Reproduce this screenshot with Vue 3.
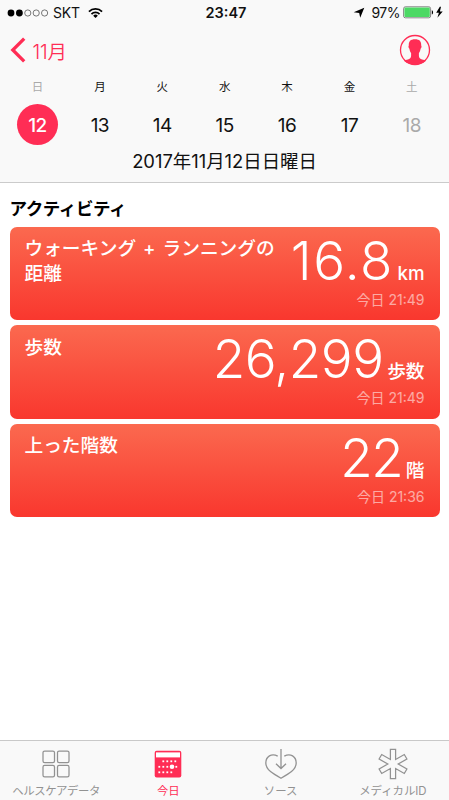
<script setup>
const days = [
  { name: '日', date: 12, weekend: true, selected: true },
  { name: '月', date: 13 },
  { name: '火', date: 14 },
  { name: '水', date: 15 },
  { name: '木', date: 16 },
  { name: '金', date: 17 },
  { name: '土', date: 18, weekend: true, future: true },
]
const cards = [
  { kind: 'distance', lines: ['ウォーキング + ランニングの', '距離'], value: '16.8', unit: 'km', time: '今日 21:49' },
  { kind: 'steps', lines: ['歩数'], value: '26,299', unit: '歩数', time: '今日 21:49' },
  { kind: 'floors', lines: ['上った階数'], value: '22', unit: '階', time: '今日 21:36' },
]
const dots = [
  [9, 10], [13, 10], [17, 10], [21, 10],
  [5, 15.5], [9, 15.5], [13, 15.5], [22, 15.5],
  [5, 21], [9, 21], [13, 21], [17, 21],
]
</script>

<template>
  <div class="screen">
    <header class="header">
      <div class="status">
        <div class="carrier">
          <svg class="signal" width="42" height="8" viewBox="0 0 42 8">
            <circle cx="4" cy="4" r="3.4" fill="#000" />
            <circle cx="12.4" cy="4" r="3.4" fill="#000" />
            <g fill="none" stroke="#555" stroke-width=".8">
              <circle cx="20.8" cy="4" r="3.1" />
              <circle cx="29.2" cy="4" r="3.1" />
              <circle cx="37.6" cy="4" r="3.1" />
            </g>
          </svg>
          <span class="network">SKT</span>
          <svg width="15" height="12" viewBox="0 0 16 12">
            <g fill="none" stroke="#000" stroke-width="1.9">
              <path d="M1 4.5a10 10 0 0 1 14 0" />
              <path d="M3.7 7.1a6.2 6.2 0 0 1 8.6 0" />
            </g>
            <path d="M8 11.4 5.5 8.9a3.5 3.5 0 0 1 5 0z" />
          </svg>
        </div>
        <span class="clock">23:47</span>
        <div class="power">
          <svg class="arrow" width="12" height="12" viewBox="0 0 12 12"><path d="M11.3.7 7.2 10.8 6.2 6 .7 5.3z" /></svg>
          <span class="percent">97%</span>
          <svg width="40" height="13" viewBox="0 0 40 13">
            <rect x=".6" y=".8" width="27" height="11" rx="1.8" fill="#fff" stroke="#666" stroke-width=".8" />
            <rect x="1.4" y="1.6" width="25.4" height="9.4" rx="1" fill="#4cd964" />
            <path d="M28.8 4.2c1.7.4 1.7 3.8 0 4.2z" />
            <path d="m36.8.8-3.6 6h2.7l-1.5 5 5.3-6.3h-2.8L38 .8z" />
          </svg>
        </div>
      </div>
      <nav class="navbar">
        <div class="back">
          <svg width="16" height="26" viewBox="0 0 16 26"><path d="M14.2 1.6 2.8 13l11.4 11.4" fill="none" stroke="#ff2d55" stroke-width="3.3" /></svg>
          <span class="month">11月</span>
        </div>
        <svg width="32" height="32" viewBox="0 0 32 32">
          <circle cx="16" cy="16" r="14.5" fill="none" stroke="#ff2d55" stroke-width="1.3" />
          <path d="M16 5.300c-4.500 0-6.400 2-6.200 6.200-.7.700-.2 2.700.6 3.200.3 2 .9 3.200 1.700 4.200v3.200c-.1 2.200-1.300 2.800-3.200 3.400-1.500.5-2.900.7-4 1.200C7.900 29.500 12 30.700 16 30.700s8.100-1.200 11.100-4c-1.100-.5-2.500-.7-4-1.200-1.900-.6-3.100-1.200-3.200-3.400v-3.200c.8-1 1.400-2.200 1.700-4.200.8-.5 1.300-2.500.6-3.200.2-4.200-1.700-6.200-6.200-6.200z" fill="#ff2d55" />
        </svg>
      </nav>
      <div class="week">
        <div v-for="d in days" :key="d.date" class="day">
          <span class="weekday" :class="{ muted: d.weekend }">{{ d.name }}</span>
          <span class="number" :class="{ selected: d.selected, muted: d.future }">{{ d.date }}</span>
        </div>
      </div>
      <div class="full-date">2017年11月12日日曜日</div>
    </header>

    <main class="content">
      <h1 class="title">アクティビティ</h1>
      <div class="cards">
        <section v-for="c in cards" :key="c.kind" class="card" :class="c.kind">
          <div class="label"><div v-for="l in c.lines" :key="l">{{ l }}</div></div>
          <div class="reading">
            <div class="amount">
              <span class="value">{{ c.value }}</span><span class="unit">{{ c.unit }}</span>
            </div>
            <div class="time">{{ c.time }}</div>
          </div>
        </section>
      </div>
    </main>

    <footer class="tabs">
      <div class="tab">
        <svg width="32" height="32" viewBox="0 0 32 32" fill="none" stroke="#929292" stroke-width="1.25">
          <rect x="3" y="3" width="11.5" height="11.5" rx="1.6" />
          <rect x="17.5" y="3" width="11.5" height="11.5" rx="1.6" />
          <rect x="3" y="17.4" width="11.5" height="11.5" rx="1.6" />
          <rect x="17.5" y="17.4" width="11.5" height="11.5" rx="1.6" />
        </svg>
        <span class="wide">ヘルスケアデータ</span>
      </div>
      <div class="tab active">
        <svg width="32" height="32" viewBox="0 0 32 32">
          <rect x="2.700" y="2.800" width="26.600" height="26.600" rx="2" fill="#ff2d55" />
          <path d="M4 4.400h24v5H4z" fill="#fff" />
          <g fill="#fff" transform="translate(2.5 3)">
            <rect v-for="([x, y], i) in dots" :key="i" :x="x - 1.1" :y="y - 0.6" width="1.8" height="1.8" />
            <circle cx="17.5" cy="15.8" r="2.3" />
          </g>
        </svg>
        <span>今日</span>
      </div>
      <div class="tab">
        <svg width="34" height="32" viewBox="0 0 34 32" fill="none" stroke="#929292" stroke-width="1.3">
          <path d="M13.7 8.1C7.5 4.800 1.800 8.600 1.800 15c0 6.800 7.500 11 15.200 15.200C24.700 26 32.200 21.800 32.200 15c0-6.400-5.700-10.200-11.900-6.900" />
          <path d="M17 1v19.500M12 15.700l5 4.800 5-4.800" />
        </svg>
        <span>ソース</span>
      </div>
      <div class="tab">
        <svg width="32" height="32" viewBox="0 0 32 32" fill="none" stroke="#929292" stroke-width="1.25">
          <path d="M13.400 1.400h5.200v10.100l8.700-5 2.600 4.500-8.700 5 8.700 5-2.600 4.500-8.700-5v10.100h-5.200V20.500l-8.700 5L2.100 21l8.700-5-8.700-5 2.600-4.500 8.700 5z" />
        </svg>
        <span>メディカルID</span>
      </div>
    </footer>
  </div>
</template>

<style>
body {
  margin: 0;
}
</style>

<style scoped>
.screen {
  box-sizing: border-box;
  width: 449px;
  height: 800px;
  display: flex;
  flex-direction: column;
  overflow: hidden;
  background: #fff;
  color: #111;
  font-family: Inter, "Noto Sans CJK JP", sans-serif;
  white-space: nowrap;
}
svg {
  display: block;
  flex: none;
}
.header {
  box-sizing: border-box;
  height: 183px;
  flex: none;
  background: #f9f9f9;
  border-bottom: 1px solid #cbcbcb;
}
.status {
  display: grid;
  grid-template-columns: 1fr auto 1fr;
  align-items: center;
  height: 25px;
  padding: 0 6px 0 7px;
  font-size: 14px;
  line-height: 25px;
}
.carrier,
.power {
  display: flex;
  align-items: center;
}
.network {
  margin: 0 8px 0 4px;
  letter-spacing: -0.2px;
}
.clock {
  margin-left: 2px;
  font-weight: 600;
  font-size: 14.5px;
}
.power {
  justify-content: flex-end;
}
.percent {
  margin: 0 3px 0 6px;
  letter-spacing: -0.5px;
}
.navbar {
  display: flex;
  align-items: center;
  justify-content: space-between;
  height: 50px;
  padding: 0 18px 0 9.5px;
}
.back {
  display: flex;
  align-items: center;
  color: #ff2d55;
}
.month {
  margin-left: 7px;
  font-size: 19.5px;
  font-weight: 350;
  letter-spacing: -0.2px;
}
.week {
  display: grid;
  grid-template-columns: repeat(7, 62.4px);
  padding-left: 6.3px;
}
.day {
  display: flex;
  flex-direction: column;
  align-items: center;
}
.weekday {
  height: 28.5px;
  font-size: 11.5px;
  line-height: 24px;
}
.number {
  width: 41px;
  height: 41px;
  border-radius: 50%;
  text-align: center;
  font-size: 19px;
  line-height: 43px;
  letter-spacing: -0.5px;
}
.muted {
  color: #aaa;
}
.selected {
  background: #ff2d55;
  color: #fff;
  font-weight: 500;
}
.full-date {
  text-align: center;
  font-size: 18.4px;
  line-height: 33px;
}
.content {
  flex: 1;
  padding: 11px 9.5px 0;
}
.title {
  margin: 0 0 2.5px;
  font-size: 17.5px;
  font-weight: 700;
  line-height: 30px;
  letter-spacing: -0.4px;
  color: #000;
}
.cards {
  display: flex;
  flex-direction: column;
  gap: 5px;
}
.card {
  box-sizing: border-box;
  display: flex;
  justify-content: space-between;
  height: 93.5px;
  padding: 10px 15px 0;
  border-radius: 7px;
  background: linear-gradient(#fb694f, #f9372e);
  color: #fff;
}
.label {
  padding-top: 0.5px;
  font-size: 18.7px;
  font-weight: 500;
  line-height: 24.5px;
  word-spacing: 2px;
}
.reading {
  text-align: right;
}
.amount {
  display: flex;
  justify-content: flex-end;
  align-items: baseline;
  height: 52px;
  line-height: 48px;
}
.value {
  font-size: 53px;
  font-weight: 270;
}
.distance .value {
  letter-spacing: 1.5px;
}
.steps .value {
  letter-spacing: -0.5px;
}
.floors .value {
  letter-spacing: -1.5px;
}
.unit {
  margin-left: 3.5px;
  font-size: 18.7px;
  font-weight: 500;
}
.time {
  font-size: 14px;
  line-height: 22px;
  opacity: .55;
}
.tabs {
  box-sizing: border-box;
  display: grid;
  grid-template-columns: repeat(4, 1fr);
  height: 60px;
  flex: none;
  border-top: 1px solid #c9c9c9;
  background: #f9f9f9;
}
.tab {
  display: flex;
  flex-direction: column;
  align-items: center;
  padding-top: 7px;
  color: #929292;
  font-size: 11.4px;
  line-height: 23px;
}
.wide {
  letter-spacing: -0.45px;
}
.active {
  color: #ff2d55;
}
</style>
